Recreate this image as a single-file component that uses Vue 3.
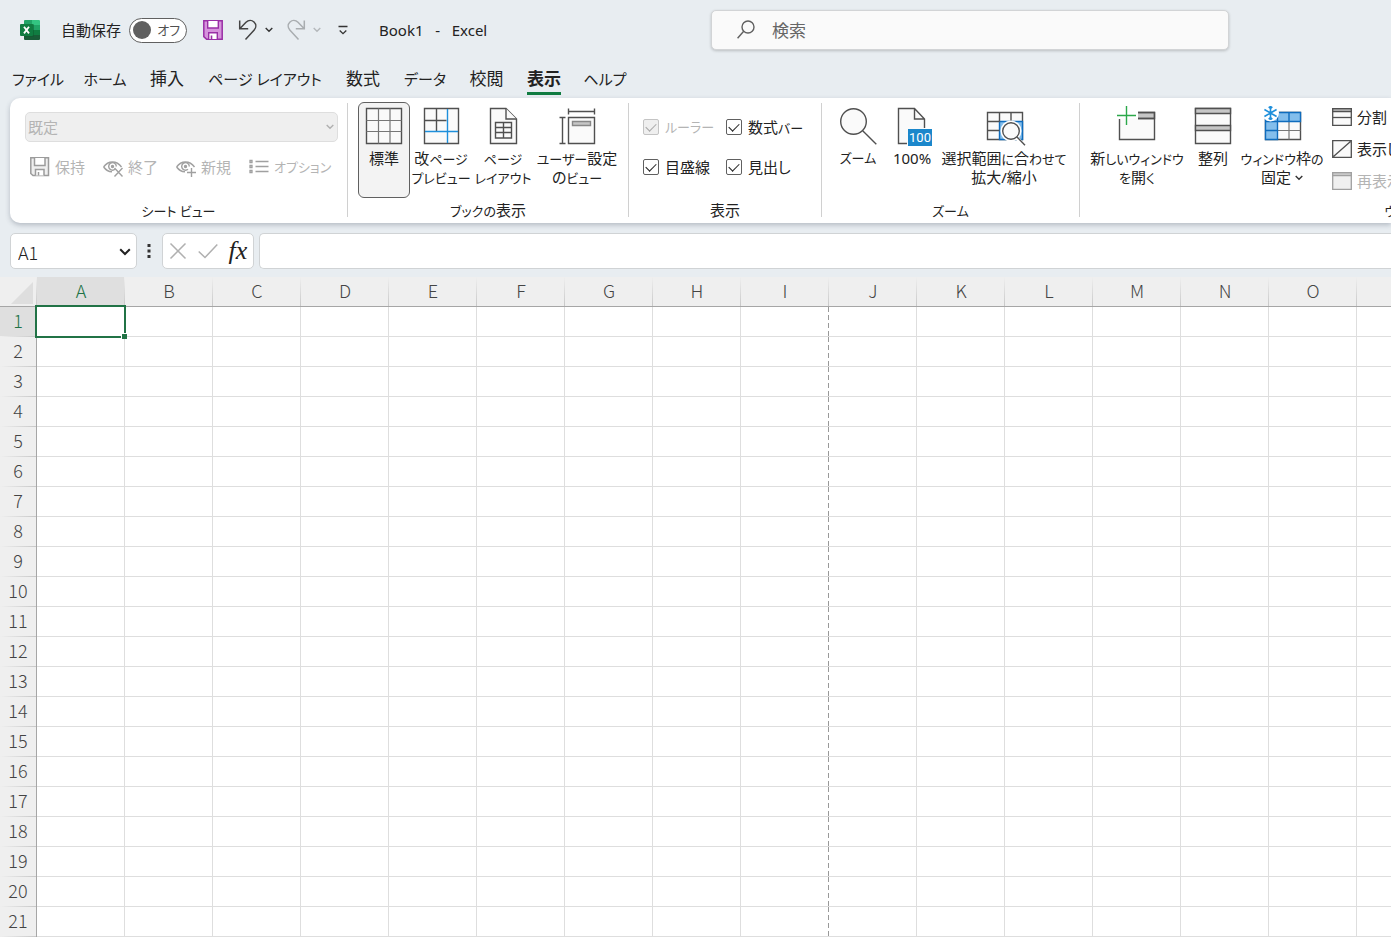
<script setup>
import { ref } from 'vue'

const tabs = ['ファイル', 'ホーム', '挿入', 'ページ レイアウト', '数式', 'データ', '校閲', '表示', 'ヘルプ']
const isKana = (t) => /^[\u30a0-\u30ff ]+$/.test(t)
const activeTab = ref('表示')
const columns = 'ABCDEFGHIJKLMNOP'.split('')
const rows = Array.from({ length: 21 }, (_, i) => i + 1)
const autoSave = ref(false)
const search = ref('')
const cellName = ref('A1')
const formula = ref('')
const ruler = ref(true)
const formulaBar = ref(true)
const gridlines = ref(true)
const headings = ref(true)
</script>

<template>
  <div class="app">
    <header class="titlebar">
      <div class="quick">
        <svg class="logo" viewBox="0 0 20 20" width="20" height="20" aria-hidden="true">
          <path d="M5 0h7v5H4V1a1 1 0 0 1 1-1z" fill="#21a366" />
          <path d="M12 0h7a1 1 0 0 1 1 1v4h-8z" fill="#33c481" />
          <path d="M4 5h8v5H4z" fill="#107c41" />
          <path d="M12 5h8v5h-8z" fill="#21a366" />
          <path d="M4 10h8v5H4z" fill="#185c37" />
          <path d="M12 10h8v5h-8z" fill="#107c41" />
          <path d="M4 15h16v4a1 1 0 0 1-1 1H5a1 1 0 0 1-1-1z" fill="#185c37" />
          <path d="M4 4h9a1 1 0 0 1 1 1v11a1 1 0 0 1-1 1H4z" fill="#0b5a2e" opacity=".5" />
          <rect x="0" y="4" width="13" height="12" rx="1" fill="#107c41" />
          <path d="M4 6.800l5 6.600M9 6.800l-5 6.600" stroke="#fff" stroke-width="1.800" fill="none" />
        </svg>
        <label class="autosave">
          <span>自動保存</span>
          <input v-model="autoSave" type="checkbox" class="sr" />
          <span class="toggle"><i></i><span class="kana">オフ</span></span>
        </label>
        <button class="tool save" aria-label="保存">
          <svg viewBox="0 0 20 20" width="20" height="20">
            <path d="M.8.8h18.400v18.400H3.600L.8 16.600z" fill="#d693dc" stroke="#9a2fa6" stroke-width="1.500" />
            <path d="M4.700 1v7h10.600V1" fill="#fff" stroke="#9a2fa6" stroke-width="1.400" />
            <path d="M5.700 19v-6.300h8.600V19" fill="#fff" stroke="#9a2fa6" stroke-width="1.400" />
            <path d="M8.500 15.500V19" stroke="#9a2fa6" stroke-width="1.600" />
          </svg>
        </button>
        <button class="tool undo" aria-label="元に戻す">
          <svg viewBox="0 0 20 22" width="20" height="22" fill="none" stroke="#444" stroke-width="1.500">
            <path d="M1.700 1.500v8.300h8.500M2 9.500l6-6.200c2.500-2.400 5.800-2.300 8-.3 2.400 2.300 2.300 5.600.2 7.900L7.500 20.500" />
          </svg>
        </button>
        <button class="tool arrow" aria-label="元に戻す履歴">
          <svg viewBox="0 0 8 6" width="8" height="6"><path d="M.7 1l3.300 3.300L7.300 1" fill="none" stroke="#333" stroke-width="1.400" /></svg>
        </button>
        <button class="tool redo" aria-label="やり直し" disabled>
          <svg viewBox="0 0 20 22" width="20" height="22" fill="none" stroke="#a9adb0" stroke-width="1.500">
            <path d="M18.300 1.500v8.300H9.800M18 9.500l-6-6.200C9.500.9 6.200 1 4 3c-2.400 2.300-2.300 5.600-.2 7.900l8.700 9.600" />
          </svg>
        </button>
        <button class="tool arrow" aria-label="やり直し履歴" disabled>
          <svg viewBox="0 0 8 6" width="8" height="6"><path d="M.7 1l3.300 3.300L7.300 1" fill="none" stroke="#b4b8bb" stroke-width="1.400" /></svg>
        </button>
        <button class="tool custom" aria-label="クイック アクセス ツール バーのユーザー設定">
          <svg viewBox="0 0 10 10" width="10" height="10" fill="none" stroke="#333" stroke-width="1.300">
            <path d="M.5 1.500h9M1.700 5.500L5 8.700l3.300-3.200" />
          </svg>
        </button>
        <h1 class="doc">Book1&nbsp;&nbsp; -&nbsp;&nbsp; Excel</h1>
      </div>
      <label class="search">
        <svg viewBox="0 0 18 20" width="18" height="20" fill="none" stroke="#606060" stroke-width="1.400">
          <circle cx="11" cy="7" r="6" /><path d="M6.700 11.300L.6 18.300" />
        </svg>
        <input v-model="search" type="search" placeholder="検索" aria-label="検索" />
      </label>
    </header>

    <nav class="tabs">
      <button v-for="t in tabs" :key="t" :class="['tab', { active: t === activeTab, 'kana-tab': isKana(t) }]" @click="activeTab = t">
        <span>{{ t }}</span>
      </button>
    </nav>

    <section class="ribbon">
      <div class="group g-sheet">
        <div class="body stack">
          <div class="combo">
            <select disabled aria-label="シート ビュー"><option>既定</option></select>
            <svg viewBox="0 0 8 6" width="8" height="6"><path d="M.7 1l3.300 3.300L7.300 1" fill="none" stroke="#b0b0b0" stroke-width="1.400" /></svg>
          </div>
          <div class="line">
            <button class="small" disabled>
              <svg viewBox="0 0 20 20" width="20" height="20" fill="none" stroke="#9c9c9c" stroke-width="1.500">
                <path d="M.8.8h17.700v17.700H3L.8 16.500z" fill="#efefef" /><path d="M4.500 1v7.500h10.500V1" fill="#fff" /><path d="M5.500 18.500v-6h8.500v6" fill="#fff" /><path d="M8.500 15v3.500" />
              </svg>保持
            </button>
            <button class="small" disabled>
              <svg viewBox="0 0 20 20" width="20" height="20" fill="none" stroke="#a0a0a0" stroke-width="1.400">
                <path d="M.6 10C3 6.500 6 5 9.500 5s6.500 1.500 9 5M.6 10c2.200 3 5 4.600 8.400 4.800" /><path d="M12 12.300A3.800 3.800 0 1 1 13.300 9.500" /><circle cx="9.500" cy="9.500" r="1" fill="#a0a0a0" /><path d="M11.500 11l8 8.500M19.500 11l-8 8.500" />
              </svg>終了
            </button>
            <button class="small" disabled>
              <svg viewBox="0 0 20 20" width="20" height="20" fill="none" stroke="#a0a0a0" stroke-width="1.400">
                <path d="M.6 10C3 6.500 6 5 9.500 5s6.500 1.500 9 5M.6 10c2.200 3 5 4.600 8.400 4.800" /><path d="M12 12.300A3.800 3.800 0 1 1 13.300 9.500" /><circle cx="9.500" cy="9.500" r="1" fill="#a0a0a0" /><path d="M15.500 11v9M11 15.500h9" />
              </svg>新規
            </button>
            <button class="small" disabled>
              <svg viewBox="0 0 20 20" width="20" height="20" fill="none" stroke="#a0a0a0" stroke-width="1.300">
                <path d="M6.500 4.500h13M6.500 9.500h13M6.500 14.500h13" /><path d="M1 3.500h2v2H1zM1 8.500h2v2H1zM1 13.500h2v2H1z" />
              </svg><span class="kana">オプション</span>
            </button>
          </div>
        </div>
        <h2><span class="kana">シート ビュー</span></h2>
      </div>

      <div class="group g-view">
        <div class="body">
          <button class="big w52 pressed">
            <svg class="ic" viewBox="0 0 48 44"><path d="M6.500 3.500h35v35h-35z" /><path d="M18.500 3.500v35M30 3.500v35M6.500 15.500h35M6.500 26.500h35" class="thin" /></svg>
            <span>標準</span>
          </button>
          <button class="big w62">
            <svg class="ic" viewBox="0 0 48 44"><path d="M7.500 3.500h34v35h-34z" /><path d="M19.500 3.500v23M7.500 15.500h22" /><path d="M30.500 4v34M8 26.500h33" class="blue" /></svg>
            <span>改<i class="kana">ページ</i><br /><i class="kana">プレビュー</i></span>
          </button>
          <button class="big w62">
            <svg class="ic" viewBox="0 0 48 44"><path d="M11.500 3.500H27L37.500 14v24.500h-26z" /><path d="M27 3.500V14h10.500M16.500 17.500h16v15.500h-16zM24.500 17.500V33M16.500 22.500h16M16.500 27.500h16" /></svg>
            <span><i class="kana">ページ</i><br /><i class="kana">レイアウト</i></span>
          </button>
          <button class="big w86">
            <svg class="ic" viewBox="0 0 48 44"><path d="M15.500 12.500h26v26h-26z" /><path d="M19.500 16.500h18v4h-18z" class="band soft" /><path d="M15.500 6.500h26M15.500 3.500v6M41.500 3.500v6M9.500 12.500v26M6.500 12.500h6M6.500 38.500h6" /></svg>
            <span><i class="kana">ユーザー</i>設定<br />の<i class="kana">ビュー</i></span>
          </button>
        </div>
        <h2><span class="kana">ブックの</span>表示</h2>
      </div>

      <div class="group g-show">
        <div class="body checks">
          <label class="check off"><input v-model="ruler" type="checkbox" disabled /><span class="kana">ルーラー</span></label>
          <label class="check"><input v-model="formulaBar" type="checkbox" /><span>数式<i class="kana">バー</i></span></label>
          <label class="check"><input v-model="gridlines" type="checkbox" /><span>目盛線</span></label>
          <label class="check"><input v-model="headings" type="checkbox" /><span>見出し</span></label>
        </div>
        <h2>表示</h2>
      </div>

      <div class="group g-zoom">
        <div class="body">
          <button class="big w56">
            <svg class="ic" viewBox="0 0 48 44"><circle cx="19.500" cy="16.500" r="12.800" /><path d="M28.700 25.700l13.600 13.600" /></svg>
            <span class="kana">ズーム</span>
          </button>
          <button class="big w52">
            <svg class="ic" viewBox="0 0 48 44"><path d="M10.500 38.500v-35h16l10 10.500v24.500z" stroke="none" /><path d="M19 38.500h-8.500v-35h16l10 10.500v9M26.500 3.500V14h10" /><path d="M20 24h24v17H20z" class="tag" /><text x="32" y="37">100</text></svg>
            <span>100%</span>
          </button>
          <button class="big w132">
            <svg class="ic" viewBox="0 0 48 44"><path d="M7.500 7.500h35v27h-35z" /><path d="M19.500 16.500h23v18h-23z" class="cell" /><path d="M19.500 7.500v9M31 7.500v9M7.500 16.500h12M7.500 25.500h12" /><circle cx="31" cy="26" r="10.500" class="halo" /><path d="M36 32l8 8.500" class="wide" /><circle cx="31" cy="26" r="8.300" /><path d="M37 32l8 8.300" /></svg>
            <span>選択範囲<i class="kana">に</i>合<i class="kana">わせて</i><br />拡大/縮小</span>
          </button>
        </div>
        <h2><span class="kana">ズーム</span></h2>
      </div>

      <div class="group g-window">
        <div class="body">
          <button class="big w98">
            <svg class="ic" viewBox="0 0 48 44"><path d="M6.500 13.500h19v-6h16v27h-35z" stroke="none" /><path d="M25 7.500h16.500v6H25" class="band" /><path d="M6.500 14v20.500h35v-27H25M25 13.500h16.500" class="line-only" /><path d="M13.500 1v19M4 10.500h19" class="green" /></svg>
            <span>新<i class="kana">しいウィンドウ</i><br /><i class="kana">を</i>開<i class="kana">く</i></span>
          </button>
          <button class="big w54">
            <svg class="ic" viewBox="0 0 48 44"><path d="M6.500 3.500h35v35h-35z" /><path d="M6.500 3.500h35v5h-35zM6.500 20.500h35v5h-35z" class="band" /></svg>
            <span>整列</span>
          </button>
          <button class="big w84">
            <svg class="ic" viewBox="0 0 48 44"><path d="M7.500 7.500h35v27h-35z" /><path d="M31 16.500v18M19.500 25.500h23" class="thin" /><path d="M7.500 7.500h35v9h-23v18h-12zM19.500 7.500v9M31 7.500v9M7.500 16.500h12M7.500 25.500h12" class="cell" /><circle cx="12.500" cy="8" r="8.500" class="halo" /><path d="M12.500 1v14M6.400 4.500l12.200 7M6.400 11.500l12.200-7M10.700 1.800l1.800 1.800 1.800-1.800M10.700 14.200l1.800-1.800 1.800 1.800" class="snow" /></svg>
            <span><i class="kana">ウィンドウ</i>枠<i class="kana">の</i><br />固定 <svg class="chev" viewBox="0 0 8 6" width="8" height="6"><path d="M.7 1l3.300 3.300L7.300 1" fill="none" stroke="#333" stroke-width="1.400" /></svg></span>
          </button>
          <div class="column">
            <button class="row">
              <svg viewBox="0 0 20 18" width="20" height="18" fill="#fafafa" stroke="#505050" stroke-width="1.300"><path d="M.7.7h18.600v16.600H.7z" /><path d="M.7.700h18.600v3H.7z" fill="#aaa" /><path d="M1 9.500h18" /></svg>分割
            </button>
            <button class="row">
              <svg viewBox="0 0 20 18" width="20" height="18" fill="#fafafa" stroke="#505050" stroke-width="1.300"><path d="M.7.7h18.600v16.600H.7zM1.500 16.500l17-15" /></svg>表示しない
            </button>
            <button class="row" disabled>
              <svg viewBox="0 0 20 18" width="20" height="18" fill="#f0f0f0" stroke="#a0a0a0" stroke-width="1.300"><path d="M.7.7h18.600v16.600H.7z" /><path d="M.7.700h18.600v3H.7z" fill="#c8c8c8" /></svg>再表示
            </button>
          </div>
        </div>
        <h2><span class="kana">ウィンドウ</span></h2>
      </div>
    </section>

    <section class="formula-row">
      <div class="field name">
        <input v-model="cellName" aria-label="名前ボックス" />
        <button aria-label="名前の一覧">
          <svg viewBox="0 0 12 8" width="12" height="8"><path d="M1.200 1.200L6 6l4.800-4.800" fill="none" stroke="#222" stroke-width="2" /></svg>
        </button>
      </div>
      <svg class="dots" viewBox="0 0 4 14" width="4" height="14"><path d="M.5 0h3v3h-3zM.5 5.500h3v3h-3zM.5 11h3v3h-3z" fill="#333" /></svg>
      <div class="field actions">
        <button aria-label="キャンセル" disabled>
          <svg viewBox="0 0 20 18" width="20" height="18"><path d="M2.500 1.500l15 15M17.500 1.500l-15 15" fill="none" stroke="#b0b0b0" stroke-width="1.500" /></svg>
        </button>
        <button aria-label="入力" disabled>
          <svg viewBox="0 0 20 18" width="20" height="18"><path d="M.7 9.500l6.300 6L19.300 2.500" fill="none" stroke="#b0b0b0" stroke-width="1.500" /></svg>
        </button>
        <button class="fx" aria-label="関数の挿入">fx</button>
      </div>
      <input v-model="formula" class="field formula" aria-label="数式バー" />
    </section>

    <main class="sheet">
      <table>
        <colgroup><col class="c-head" /><col v-for="c in columns" :key="c" class="c-cell" /></colgroup>
        <thead>
          <tr>
            <th class="corner"><svg viewBox="0 0 22 22" width="22" height="22"><path d="M22 0v22H0z" fill="#dedede" /></svg></th>
            <th v-for="c in columns" :key="c" scope="col" :class="{ selected: c === 'A' }">{{ c }}</th>
          </tr>
        </thead>
        <tbody>
          <tr v-for="r in rows" :key="r">
            <th scope="row" :class="{ selected: r === 1 }">{{ r }}</th>
            <td v-for="c in columns" :key="c" :class="{ 'page-break': c === 'I' }">
              <div v-if="r === 1 && c === 'A'" class="cursor"><i></i></div>
            </td>
          </tr>
        </tbody>
      </table>
    </main>
  </div>
</template>

<style>
body {
  background: #e8edf1;
}
</style>

<style scoped>
.app {
  width: 100%;
  min-height: 100vh;
  overflow: hidden;
  background: #e8edf1;
  color: #222;
  font-family: "Noto Sans", "Noto Sans CJK JP", sans-serif;
  font-size: 15px;
  line-height: 19px;
  font-feature-settings: "palt";
}
.app * {
  box-sizing: border-box;
}
svg {
  display: block;
  flex: none;
}
button,
input,
select {
  margin: 0;
  padding: 0;
  border: 0;
  background: none;
  color: inherit;
  font: inherit;
  font-feature-settings: inherit;
}
h1,
h2 {
  margin: 0;
  font-size: 15px;
  font-weight: 400;
}
.kana {
  font-size: 13px;
  font-style: normal;
  line-height: 1;
}
.titlebar {
  display: flex;
  align-items: center;
  height: 60px;
}
.quick {
  display: flex;
  align-items: center;
  flex: none;
  width: 711px;
  padding-left: 20px;
}
.autosave {
  display: flex;
  align-items: center;
  gap: 8px;
  margin: 0 16px 0 21px;
}
.sr {
  position: absolute;
  opacity: 0;
  width: 1px;
  height: 1px;
}
.toggle {
  display: flex;
  align-items: center;
  justify-content: space-between;
  width: 58px;
  height: 25px;
  padding: 0 6px 0 3px;
  border: 1px solid #606060;
  border-radius: 13px;
  background: #fff;
  color: #505050;
}
.toggle i {
  width: 18px;
  height: 18px;
  border-radius: 50%;
  background: #606060;
}
.undo {
  margin-left: 15px;
}
.arrow {
  margin-left: 7px;
}
.redo {
  margin-left: 13px;
}
.custom {
  margin-left: 17px;
}
.doc {
  margin-left: 31px;
}
.search {
  display: flex;
  align-items: center;
  gap: 17px;
  flex: 0 1 518px;
  height: 40px;
  padding-left: 25px;
  border: 1px solid #d2d4d6;
  border-radius: 5px;
  background: #fafafa;
  box-shadow: 0 1px 3px rgba(0, 0, 0, 0.2);
}
.search input {
  flex: 1;
  min-width: 0;
  font-size: 17px;
  outline: 0;
}
.search input::placeholder {
  color: #666;
  opacity: 1;
}
.tabs {
  display: grid;
  grid-template-columns: 68px 66px 58px 138px 58px 66px 57px 58px 64px;
  height: 38px;
  padding-left: 4px;
}
.tab {
  display: flex;
  justify-content: center;
  white-space: nowrap;
  font-size: 17px;
  line-height: 24px;
}
.kana-tab {
  font-size: 15px;
}
.tab span {
  padding-top: 7px;
  height: 35px;
  border-bottom: 3px solid transparent;
}
.tab.active span {
  border-color: #107c41;
  font-weight: 700;
}
.ribbon {
  display: flex;
  height: 125px;
  margin-left: 10px;
  border-radius: 10px 0 0 10px;
  background: #fff;
  box-shadow: 0 2px 5px rgba(60, 70, 90, 0.3);
}
.group {
  display: flex;
  flex-direction: column;
  flex: none;
  padding-top: 4px;
}
.group:not(:last-child) {
  border-right: 1px solid transparent;
  border-image: linear-gradient(#0000 6px, #d0d0d0 6px, #d0d0d0 118px, #0000 118px) 1;
}
.g-sheet {
  width: 338px;
}
.g-view {
  width: 281px;
}
.g-show {
  width: 193px;
}
.g-zoom {
  width: 258px;
}
.g-window {
  width: 664px;
}
.body {
  display: flex;
  height: 98px;
  padding-left: 10px;
}
.g-zoom .body,
.g-window .body {
  padding-left: 8px;
}
.group h2 {
  line-height: 20px;
  text-align: center;
}
.body.stack {
  flex-direction: column;
  gap: 10px;
  padding: 10px 9px 0 15px;
}
.combo {
  display: flex;
  align-items: center;
  height: 30px;
  padding: 0 3px 0 2px;
  border: 1px solid #dedede;
  border-radius: 5px;
  background: #efefef;
}
.combo select {
  flex: 1;
  appearance: none;
  opacity: 1;
  color: #b4b4b4;
}
.line {
  display: flex;
  gap: 18px;
  padding-left: 5px;
}
.small,
.row {
  display: flex;
  align-items: center;
  gap: 5px;
  height: 30px;
  white-space: nowrap;
}
.small:disabled,
.row:disabled {
  color: #b4b4b4;
}
.big {
  display: flex;
  flex-direction: column;
  align-items: center;
  flex: none;
  height: 96px;
  padding-top: 2px;
  border: 1px solid transparent;
  border-radius: 6px;
  white-space: nowrap;
}
.big > .kana {
  line-height: 19px;
}
.pressed {
  border-color: #606060;
  background: #f3f3f3;
}
.w52 {
  width: 52px;
}
.w54 {
  width: 54px;
}
.w56 {
  width: 56px;
}
.w62 {
  width: 62px;
}
.w84 {
  width: 84px;
}
.w86 {
  width: 86px;
}
.w98 {
  width: 98px;
}
.w132 {
  width: 132px;
}
.ic {
  width: 48px;
  height: 44px;
  fill: #fafafa;
  stroke: #505050;
  stroke-width: 1.4;
}
.ic .thin {
  stroke: #777;
  stroke-width: 1.2;
}
.ic .blue {
  stroke: #1e8fdb;
}
.ic .band {
  fill: #c6c6c6;
}
.ic .soft {
  stroke: #888;
}
.ic .cell {
  fill: #83beec;
  stroke: #0f6cbd;
}
.ic .halo {
  fill: #fff;
  stroke: none;
}
.ic .wide {
  stroke-width: 4;
  stroke: #fff;
}
.ic .line-only {
  fill: none;
}
.ic .green {
  stroke: #2ba84a;
}
.ic .snow {
  fill: none;
  stroke: #1e8fdb;
  stroke-width: 1.6;
}
.ic .tag {
  fill: #1b87cb;
  stroke: none;
}
.ic text {
  fill: #fff;
  stroke: none;
  font-family: Roboto, sans-serif;
  font-size: 13px;
  text-anchor: middle;
}
.chev {
  display: inline-block;
  vertical-align: 2px;
}
.body.checks {
  display: grid;
  grid-template-columns: 83px 83px;
  grid-auto-rows: 40px;
  padding: 5px 0 0 14px;
}
.check {
  display: flex;
  align-items: center;
  gap: 6px;
  white-space: nowrap;
}
.check.off {
  color: #b4b4b4;
}
.check input {
  flex: none;
  appearance: none;
  display: grid;
  place-items: center;
  width: 16px;
  height: 16px;
  border: 1px solid #606060;
  border-radius: 2px;
  background: #fff;
}
.check input:checked::before {
  content: "";
  width: 9px;
  height: 5px;
  margin-bottom: 3px;
  border: solid #222;
  border-width: 0 0 1px 1px;
  transform: rotate(-45deg);
}
.check input:disabled {
  border-color: #c4c4c4;
  background: #efefef;
}
.check input:disabled::before {
  border-color: #a8a8a8;
}
.column {
  padding-left: 8px;
}
.row {
  height: 32px;
  padding-bottom: 2px;
}
.formula-row {
  display: flex;
  align-items: center;
  height: 54px;
  padding: 2px 0 0 10px;
}
.field {
  height: 36px;
  border: 1px solid #d0d3d5;
  border-radius: 5px;
  background: #fff;
}
.name {
  display: flex;
  align-items: center;
  width: 127px;
  padding: 2px 5px 0 7px;
  font-family: "Noto Sans CJK JP", sans-serif;
  font-size: 18px;
  font-weight: 300;
}
.name input {
  flex: 1;
  min-width: 0;
  outline: 0;
}
.dots {
  margin: 0 11px 0 10px;
}
.actions {
  display: flex;
  align-items: center;
  gap: 10px;
  width: 92px;
  padding-left: 5px;
}
.fx {
  width: 20px;
  font-family: "Liberation Serif", serif;
  font-size: 26px;
  font-style: italic;
  line-height: 28px;
}
.formula {
  flex: 1;
  min-width: 0;
  margin-left: 5px;
  padding: 0 8px;
  border-right: 0;
  border-radius: 5px 0 0 5px;
  outline: 0;
}
.sheet {
  overflow: hidden;
  background: #fff;
}
table {
  width: 1445px;
  table-layout: fixed;
  border-collapse: separate;
  border-spacing: 0;
}
.c-head {
  width: 37px;
}
.c-cell {
  width: 88px;
}
th {
  height: 30px;
  padding: 0 0 4px;
  color: #444;
  font-family: "Noto Sans CJK JP", sans-serif;
  font-size: 18px;
  font-weight: 300;
  line-height: 24px;
}
thead th {
  border-bottom: 1px solid #a6a6a6;
  background: linear-gradient(#efefef, #c8c8c8) right / 1px 100% no-repeat #efefef;
}
tbody th {
  border-right: 1px solid #a6a6a6;
  background: linear-gradient(90deg, #efefef, #c8c8c8) bottom / 100% 1px no-repeat #efefef;
}
thead .corner {
  padding: 3px 3px 0 11px;
}
th.selected {
  background-color: #dfdfdf;
  color: #217346;
}
td {
  position: relative;
  padding: 0;
  border-right: 1px solid #dedede;
  border-bottom: 1px solid #dedede;
}
td.page-break {
  border-right: 0;
  background: repeating-linear-gradient(#999 0 5px, #fff 5px 8px) right / 1px 100% no-repeat;
}
.cursor {
  position: absolute;
  z-index: 1;
  inset: -2px;
  border: 2px solid #217346;
}
.cursor i {
  position: absolute;
  right: -3px;
  bottom: -3px;
  width: 6px;
  height: 6px;
  border: solid #fff;
  border-width: 1px 0 0 1px;
  background: #217346;
}
</style>
